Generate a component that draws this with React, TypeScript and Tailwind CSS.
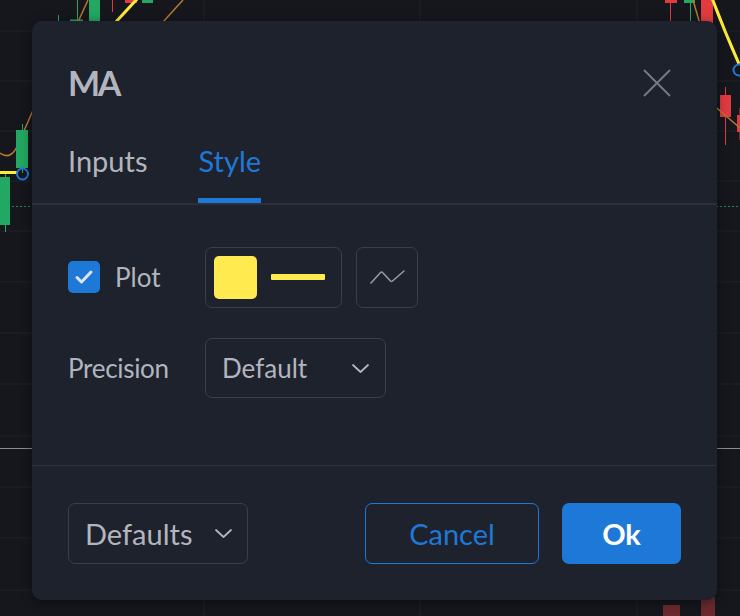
import React from "react";

function Chart() {
  const hs = [31, 81, 131, 181, 231, 282, 333, 384, 436, 487, 538, 590];
  const vs = [204, 420, 637];
  const green = "#22a862";
  const red = "#e23b3f";
  return (
    <svg className="absolute inset-0" width="740" height="616" viewBox="0 0 740 616">
      {hs.map((y) => (
        <line key={"h" + y} x1="0" x2="740" y1={y} y2={y} stroke="#1f2229" strokeWidth="1" />
      ))}
      {vs.map((x) => (
        <line key={"v" + x} x1={x} x2={x} y1="0" y2="616" stroke="#1f2229" strokeWidth="1" />
      ))}
      <line x1="0" x2="740" y1="206.5" y2="206.5" stroke="#1f8a52" strokeWidth="1" strokeDasharray="2 2" />
      <line x1="0" x2="740" y1="448.5" y2="448.5" stroke="#8a8d96" strokeWidth="1" />
      {/* top-left */}
      <line x1="58.5" x2="58.5" y1="15" y2="23" stroke={green} strokeWidth="1" />
      <line x1="77.5" x2="77.5" y1="0" y2="21" stroke={green} strokeWidth="1" />
      <rect x="70" y="19.5" width="13" height="2" fill={green} />
      <rect x="89" y="0" width="11" height="24" fill={green} />
      <line x1="112.5" x2="112.5" y1="0" y2="12" stroke={red} strokeWidth="1" />
      <rect x="125" y="0" width="12" height="3" fill={red} />
      <rect x="142" y="0" width="11" height="3" fill={green} />
      <line x1="78" y1="22" x2="88" y2="0" stroke="#b8782d" strokeWidth="1.5" />
      <line x1="163" y1="22" x2="183" y2="0" stroke="#b8782d" strokeWidth="1.5" />
      <line x1="114" y1="24" x2="138" y2="-2" stroke="#ffeb3b" strokeWidth="3" />
      {/* top-right */}
      <line x1="670.5" x2="670.5" y1="0" y2="24" stroke={red} strokeWidth="1" />
      <rect x="665" y="0" width="12" height="3" fill={red} />
      <line x1="690.5" x2="690.5" y1="0" y2="24" stroke={green} strokeWidth="1" />
      <rect x="684" y="0" width="11" height="3" fill={green} />
      <line x1="693" y1="0" x2="700" y2="24" stroke="#b8782d" strokeWidth="1.5" />
      <rect x="701" y="0" width="12" height="24" fill={red} />
      <path d="M712 -2 Q 724 30 739 64" stroke="#ffeb3b" strokeWidth="3" fill="none" />
      <circle cx="739" cy="70" r="5.5" stroke="#1e78d8" strokeWidth="2" fill="none" />
      {/* right side */}
      <line x1="725.5" x2="725.5" y1="87" y2="145" stroke={red} strokeWidth="1" />
      <rect x="720" y="95" width="11" height="22" fill={red} />
      <line x1="740" x2="740" y1="108" y2="140" stroke={red} strokeWidth="1" />
      <rect x="737" y="115" width="4" height="17" fill={red} />
      <line x1="712" y1="104" x2="740" y2="128" stroke="#b8782d" strokeWidth="1.5" />
      {/* left side */}
      <path d="M0 153 Q 12 162 20 140 L 34 108" stroke="#b8782d" strokeWidth="1.5" fill="none" />
      <line x1="22.5" x2="22.5" y1="124" y2="173" stroke={green} strokeWidth="1" />
      <rect x="16" y="130" width="12" height="38" fill={green} />
      <line x1="0" y1="172.5" x2="17" y2="172.5" stroke="#ffeb3b" strokeWidth="3" />
      <circle cx="22.5" cy="174" r="5.5" stroke="#1e78d8" strokeWidth="2" fill="none" />
      <line x1="5.5" x2="5.5" y1="174" y2="232" stroke={green} strokeWidth="1" />
      <rect x="0" y="177" width="10" height="48" fill={green} />
      {/* bottom */}
      <rect x="663" y="605" width="17" height="11" fill="#6a2a2f" />
      <rect x="701" y="597" width="14" height="19" fill="#6a2a2f" />
    </svg>
  );
}

function Chevron() {
  return (
    <svg width="19" height="11" viewBox="0 0 19 11" fill="none">
      <path d="M2 2 L9.5 9 L17 2" stroke="#b2b5be" strokeWidth="1.8" strokeLinecap="round" strokeLinejoin="round" />
    </svg>
  );
}

export default function App() {
  return (
    <div
      className="relative w-[740px] h-[616px] overflow-hidden bg-[#15171d]"
      style={{ fontFamily: "Lato, 'Open Sans', sans-serif" }}
    >
      <Chart />
      <div className="relative ml-[32px] pt-[21px]">
        <div className="w-[685px] h-[579px] rounded-[10px] bg-[#1e222d] flex flex-col shadow-[0_2px_12px_rgba(0,0,0,0.45)]">
          {/* header */}
          <div className="pt-[40px] pl-[36px] pr-[46px] h-[83px] flex items-end justify-between">
            <div className="h-[43px] flex items-center text-[34px] leading-[43px] font-bold tracking-[-2.5px] text-[#b2b5be]">MA</div>
            <div className="h-[43px] flex items-center">
              <svg width="28" height="28" viewBox="0 0 28 28">
                <path d="M1 1 L27 27 M27 1 L1 27" stroke="#787b86" strokeWidth="1.8" />
              </svg>
            </div>
          </div>
          {/* tabs */}
          <div className="mt-[42px] pl-[36px] flex gap-[51px]">
            <div className="flex flex-col">
              <span className="text-[29px] leading-[29px] text-[#b2b5be]">Inputs</span>
              <div className="h-[28px]" />
            </div>
            <div className="flex flex-col">
              <span className="text-[29px] leading-[29px] text-[#1e78d8]">Style</span>
              <div className="h-[23px]" />
              <div className="h-[5px] bg-[#1e78d8]" />
            </div>
          </div>
          <div className="h-[2px] bg-[#2c303b]" />
          {/* body */}
          <div className="pt-[42px] pl-[36px] flex flex-col gap-[31px] h-[260px]">
            <div className="flex items-center h-[60px]">
              <div className="w-[137px] flex items-center gap-[15px]">
                <div className="w-[32px] h-[32px] rounded-[5px] bg-[#1e78d8] flex items-center justify-center">
                  <svg width="20" height="16" viewBox="0 0 20 16">
                    <path d="M3 8.5 L7.5 13 L17 3" stroke="#e0e3eb" strokeWidth="3" fill="none" strokeLinecap="round" strokeLinejoin="round" />
                  </svg>
                </div>
                <span className="text-[26px] leading-[26px] text-[#b2b5be]">Plot</span>
              </div>
              <div className="w-[137px] h-[61px] rounded-[7px] border border-[#3a3e49] flex items-center pl-[8px] gap-[14px]">
                <div className="w-[43px] h-[43px] rounded-[5px] bg-[#ffeb50]" />
                <div className="w-[54px] h-[6px] rounded-[1px] bg-[#ffeb50]" />
              </div>
              <div className="ml-[14px] w-[62px] h-[61px] rounded-[7px] border border-[#3a3e49] flex items-center justify-center">
                <svg width="36" height="16" viewBox="0 0 36 16" fill="none">
                  <path d="M2 14 L11.5 3.5 Q12.5 2.5 13.5 3.5 L21.5 12 Q22.5 13 23.5 12 L35 2" stroke="#9598a1" strokeWidth="1.6" strokeLinecap="round" strokeLinejoin="round" />
                </svg>
              </div>
            </div>
            <div className="flex items-center h-[60px]">
              <div className="w-[137px] text-[26px] leading-[26px] tracking-[-0.3px] text-[#b2b5be]">Precision</div>
              <div className="w-[181px] h-[60px] rounded-[7px] border border-[#3a3e49] flex items-center justify-between pl-[16px] pr-[15px]">
                <span className="text-[26px] leading-[26px] text-[#b2b5be]">Default</span>
                <Chevron />
              </div>
            </div>
          </div>
          <div className="h-[1px] bg-[#2c303b]" />
          {/* footer */}
          <div className="pt-[37px] px-[36px] flex items-center justify-between">
            <div className="w-[180px] h-[61px] rounded-[7px] border border-[#3a3e49] flex items-center justify-between pl-[16px] pr-[14px]">
              <span className="text-[29px] leading-[29px] text-[#b2b5be]">Defaults</span>
              <Chevron />
            </div>
            <div className="flex items-center gap-[23px]">
              <div className="w-[174px] h-[61px] rounded-[7px] border border-[#1e78d8] flex items-center justify-center text-[29px] leading-[29px] text-[#1e78d8]">
                Cancel
              </div>
              <div className="w-[119px] h-[61px] rounded-[7px] bg-[#1e78d8] flex items-center justify-center text-[29px] leading-[29px] font-bold text-white">
                Ok
              </div>
            </div>
          </div>
        </div>
      </div>
    </div>
  );
}
